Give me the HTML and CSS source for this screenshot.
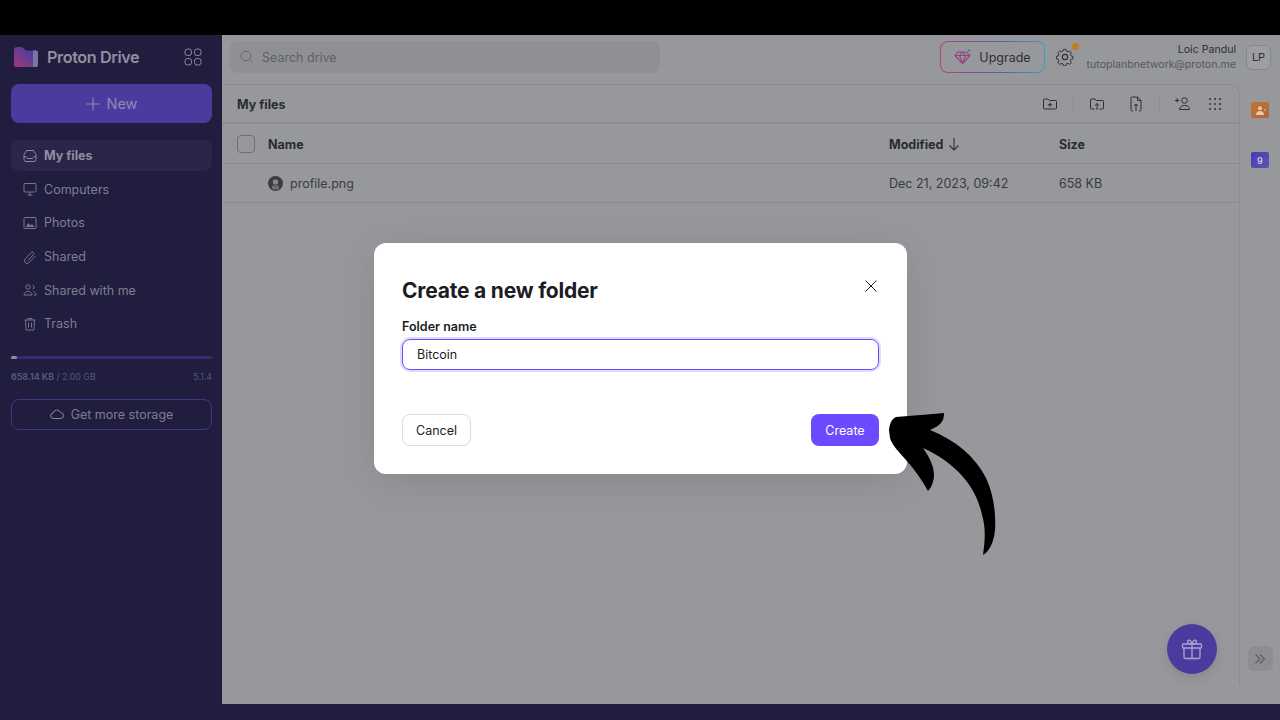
FILE: index.html
```html
<!DOCTYPE html>
<html lang="en">
<head>
  <meta charset="UTF-8">
  <title>Proton Drive</title>
  <link rel="stylesheet" href="styles.css">
</head>
<body>
  <div class="black-bar"></div>

  <div class="app">
    <aside class="sidebar">
      <div class="brand">
        <svg class="brand-logo" width="26" height="22" viewBox="0 0 26 22">
          <defs>
            <linearGradient id="folderGrad" x1="0" y1="1" x2="1" y2="0">
              <stop offset="0" stop-color="#a2386f"/>
              <stop offset="0.6" stop-color="#5f3c9b"/>
              <stop offset="1" stop-color="#46397f"/>
            </linearGradient>
          </defs>
          <path d="M1 4a3 3 0 0 1 3-3h5l4 3.500h10a2 2 0 0 1 2 2V19a2 2 0 0 1-2 2H3a2 2 0 0 1-2-2z" fill="url(#folderGrad)"/>
          <path d="M20 4.500h3a2 2 0 0 1 2 2V19a2 2 0 0 1-2 2h-3z" fill="#7a74a8"/>
        </svg>
        <span class="brand-name">Proton Drive</span>
        <svg class="apps-icon" width="18" height="18" viewBox="0 0 18 18" fill="none" stroke="#8b8a9c" stroke-width="1">
          <rect x="1" y="1" width="6.500" height="6.500" rx="2.500"/>
          <rect x="10.500" y="1" width="6.500" height="6.500" rx="2.500"/>
          <rect x="1" y="10.500" width="6.500" height="6.500" rx="2.500"/>
          <rect x="10.500" y="10.500" width="6.500" height="6.500" rx="2.500"/>
        </svg>
      </div>

      <button class="new-btn">
        <svg width="14" height="14" viewBox="0 0 14 14" stroke="#8f8ab5" stroke-width="1.100"><path d="M7 .5v13M.5 7h13"/></svg>
        New
      </button>

      <nav class="nav">
        <a class="nav-item active">
          <svg width="14" height="14" viewBox="0 0 14 14" fill="none" stroke="#8b8a9c"><path d="M1 8V5.500L3.500 1.500h7L13 5.500V10.500a2 2 0 0 1-2 2H3a2 2 0 0 1-2-2V8c2-1 3 .2 3.500 1.500h5C10 8.200 11 7 13 8"/></svg>
          My files
        </a>
        <a class="nav-item">
          <svg width="14" height="14" viewBox="0 0 14 14" fill="none" stroke="#77768c"><rect x="1" y="1.500" width="12" height="8.500" rx="1"/><path d="M7 10v3M4.500 13h5"/></svg>
          Computers
        </a>
        <a class="nav-item">
          <svg width="14" height="14" viewBox="0 0 14 14" fill="none" stroke="#77768c"><rect x="1" y="1.500" width="12" height="11" rx="1"/><path d="M2.500 11l3-4 2 2.500 1.500-1.500 2.500 3z" fill="#77768c" stroke="none"/></svg>
          Photos
        </a>
        <a class="nav-item">
          <svg width="14" height="14" viewBox="0 0 14 14" fill="none" stroke="#77768c"><path d="M5 10.500l5.500-6a1.500 1.500 0 0 0-2.200-2L2 9a2.700 2.700 0 0 0 3.800 3.800l6.500-6.800"/></svg>
          Shared
        </a>
        <a class="nav-item">
          <svg width="14" height="14" viewBox="0 0 14 14" fill="none" stroke="#77768c"><circle cx="5" cy="4" r="2.200"/><path d="M1 12c0-2 1.500-3.500 4-3.500S9 10 9 12zM9.500 2a2.200 2.200 0 0 1 0 4.200M10.500 8.500c1.500.2 2.500 1.500 2.500 3.500h-2"/></svg>
          Shared with me
        </a>
        <a class="nav-item">
          <svg width="14" height="14" viewBox="0 0 14 14" fill="none" stroke="#77768c"><path d="M1.500 3h11M5 3V1.500h4V3M2.500 3l.7 10h7.600l.7-10M5.500 5.500v5M8.500 5.500v5"/></svg>
          Trash
        </a>
      </nav>

      <div class="storage-track"><div class="storage-fill"></div></div>
      <div class="storage-info">
        <span><b>658.14 KB</b> / 2.00 GB</span>
        <span>5.1.4</span>
      </div>
      <button class="storage-btn">
        <svg width="14" height="14" viewBox="0 0 14 14" fill="none" stroke="#8b8a9c"><path d="M3.500 11.500a2.700 2.700 0 0 1-.3-5.400A3.800 3.800 0 0 1 10.500 5.500a3 3 0 0 1 0 6z"/></svg>
        Get more storage
      </button>
    </aside>

    <div class="main">
      <header class="topbar">
        <div class="search">
          <svg width="14" height="14" viewBox="0 0 14 14" fill="none" stroke="#68696e"><circle cx="6" cy="6" r="4.800"/><path d="M9.500 9.500L13 13"/></svg>
          Search drive
        </div>
        <div class="upgrade">
          <svg width="18" height="16" viewBox="0 0 18 16" fill="none" stroke="#96407f" stroke-width="1.100">
            <path d="M4 3h8l4 3.500-7.500 8L1 6.500zM1 6.500h15M5.500 6.500l3 8 3-8L8.500 3z"/>
            <path d="M15 0v3M13.500 1.500h3" stroke="#2f86a5"/>
          </svg>
          Upgrade
        </div>
        <div class="settings">
          <svg width="18" height="18" viewBox="0 0 24 24" fill="none" stroke="#2e2f36" stroke-width="1.500" stroke-linejoin="round">
            <circle cx="12" cy="12" r="3.500"/>
            <path d="M10 2h4l.6 3 2.500 1.100 2.600-1.700 2.800 2.900-1.700 2.500 1 2.500 3 .7v4l-3 .6-1 2.500 1.700 2.600-2.800 2.800-2.600-1.700-2.500 1-.6 3h-4l-.6-3-2.500-1-2.600 1.700-2.800-2.800 1.700-2.600-1-2.500-3-.6v-4l3-.7 1-2.500-1.700-2.500 2.800-2.900 2.600 1.700L9.400 5z" transform="translate(12 12) scale(.86) translate(-12.500 -14)"/>
          </svg>
          <span class="settings-dot"></span>
        </div>
        <div class="user">
          <div class="user-name">Loic Pandul</div>
          <div class="user-mail">tutoplanbnetwork@proton.me</div>
        </div>
        <div class="avatar">LP</div>
      </header>

      <div class="body-row">
        <section class="panel">
          <div class="toolbar">
            <h2 class="toolbar-title">My files</h2>
            <svg class="tool" width="16" height="16" viewBox="0 0 16 16"><path d="M1.500 4a1 1 0 0 1 1-1h3.500l1.500 1.500h6a1 1 0 0 1 1 1V12a1 1 0 0 1-1 1h-11a1 1 0 0 1-1-1zM8 6.500v4.500M5.800 8.700h4.400"/></svg>
            <span class="tool-sep"></span>
            <svg class="tool" width="16" height="16" viewBox="0 0 16 16"><path d="M5.500 13h-3a1 1 0 0 1-1-1V4a1 1 0 0 1 1-1h3.500l1.500 1.500h6a1 1 0 0 1 1 1V12a1 1 0 0 1-1 1h-3M8 14V7.500M5.800 9.700L8 7.500l2.200 2.200"/></svg>
            <svg class="tool" width="16" height="16" viewBox="0 0 16 16"><path d="M5 15H4a1 1 0 0 1-1-1V2a1 1 0 0 1 1-1h5.500L13 4.500V14a1 1 0 0 1-1 1h-1M9.500 1v3.500H13M8 15V8M6 10l2-2 2 2"/></svg>
            <span class="tool-sep"></span>
            <svg class="tool" width="16" height="16" viewBox="0 0 16 16"><circle cx="9.500" cy="4.500" r="2.800"/><path d="M4.500 13.500c0-2.500 2-4 5-4s5 1.500 5 3v1zM0 4.500h4.500M2.200 2.300v4.400"/></svg>
            <svg class="tool-dots" width="14" height="14" viewBox="0 0 14 14" fill="#2e2f36">
              <circle cx="2" cy="2" r="1"/><circle cx="7" cy="2" r="1"/><circle cx="12" cy="2" r="1"/>
              <circle cx="2" cy="7" r="1"/><circle cx="7" cy="7" r="1"/><circle cx="12" cy="7" r="1"/>
              <circle cx="2" cy="12" r="1"/><circle cx="7" cy="12" r="1"/><circle cx="12" cy="12" r="1"/>
            </svg>
          </div>

          <div class="table-row table-head">
            <span class="check"></span>
            <span>Name</span>
            <span class="sorted">Modified
              <svg width="12" height="14" viewBox="0 0 12 14" fill="none" stroke="#2e2f36" stroke-width="1.100"><path d="M6 1v12M1.500 8.500L6 13l4.500-4.500"/></svg>
            </span>
            <span>Size</span>
          </div>
          <div class="table-row file-row">
            <span></span>
            <span class="file-name">
              <svg width="15" height="15" viewBox="0 0 15 15">
                <circle cx="7.500" cy="7.500" r="7.500" fill="#3b3c40"/>
                <rect x="5" y="3.500" width="5" height="5" rx="1.500" fill="#86878b"/>
                <rect x="4" y="9.500" width="7" height="4" rx="1" fill="#6d6e72"/>
              </svg>
              profile.png
            </span>
            <span>Dec 21, 2023, 09:42</span>
            <span>658 KB</span>
          </div>
        </section>

        <aside class="rail">
          <div class="rail-app rail-contacts">
            <svg width="12" height="9" viewBox="0 0 12 9" fill="#e6c9ac"><circle cx="6" cy="2.200" r="2"/><path d="M2 9c0-2.500 1.500-4 4-4s4 1.500 4 4zM10 3.500h2v1h-2z"/></svg>
          </div>
          <div class="rail-app rail-calendar">9</div>
          <div class="rail-toggle">
            <svg width="12" height="12" viewBox="0 0 12 12" fill="none" stroke="#5a5b60" stroke-width="1.100"><path d="M1.500 1.500L6 6l-4.500 4.500M6 1.500L10.500 6 6 10.500"/></svg>
          </div>
        </aside>
      </div>
    </div>
  </div>

  <div class="bottom-bar"></div>

  <button class="gift">
    <svg width="22" height="22" viewBox="0 0 22 22" fill="none" stroke="#a8a4cf" stroke-width="1.300" stroke-linejoin="round">
      <rect x="1.500" y="6" width="19" height="4" rx="1"/>
      <path d="M3 10v9a1.500 1.500 0 0 0 1.500 1.500h13A1.500 1.500 0 0 0 19 19v-9M11 6v14.500M11 6C9 6 6.500 5.500 6.500 3.500S10 1 11 6zM11 6c2 0 4.500-.5 4.500-2.500S12 1 11 6z"/>
    </svg>
  </button>

  <div class="overlay">
    <div class="modal">
      <div class="modal-head">
        <h1 class="modal-title">Create a new folder</h1>
        <svg class="modal-close" width="12" height="12" viewBox="0 0 12 12" stroke="#1c1c22" stroke-width="1"><path d="M.5.500l11 11M11.500.500l-11 11"/></svg>
      </div>
      <label class="field-label">Folder name</label>
      <div class="field">Bitcoin</div>
      <div class="modal-foot">
        <button class="btn-cancel">Cancel</button>
        <button class="btn-create">Create</button>
      </div>
    </div>
  </div>

  <svg class="arrow" width="125" height="160" viewBox="880 405 125 160">
    <path d="M889 430C890 422 892 419 896 417C912 416 930 414 944 413C944 420 942 425 930 430C955 440 975 456 986 478C994 495 996 515 995 530C994 542 989 552 983 555C985 540 986 528 982 515C977 490 960 465 923 448C930 458 934 467 934 475C934 482 931 488 928 491C922 480 915 470 906 460C899 452 892 445 890 438z" fill="#000"/>
  </svg>
</body>
</html>
```

FILE: styles.css
```css
* {
  box-sizing: border-box;
}
html, body {
  margin: 0;
  height: 720px;
  overflow: hidden;
}
body {
  font-family: Inter, "Liberation Sans", sans-serif;
  font-size: 12.500px;
  color: #2e2f36;
  background-color: #97989c;
  display: flex;
  flex-direction: column;
}
button {
  font-family: inherit;
  cursor: pointer;
}
.black-bar {
  height: 35px;
  background-color: #000;
}
.bottom-bar {
  height: 16px;
  background-color: #201d3e;
}
.app {
  height: 669px;
  display: flex;
}

/* sidebar */
.sidebar {
  width: 222px;
  background-color: #201d3e;
  padding: 0 10px 0 11px;
  color: #8b8a9c;
}
.brand {
  height: 49px;
  display: flex;
  align-items: center;
  padding: 0 0 5px 2px;
}
.brand-name {
  margin-left: 8px;
  font-size: 16.200px;
  font-weight: 600;
  letter-spacing: -0.4px;
  color: #918f9f;
  flex: 1;
}
.apps-icon {
  margin-right: 10px;
}
.new-btn {
  width: 201px;
  height: 39px;
  border: 0;
  border-radius: 8px;
  background-color: #4d3a9e;
  color: #8f8ab5;
  font-size: 14.500px;
  display: flex;
  align-items: center;
  justify-content: center;
  gap: 7px;
}
.nav {
  margin-top: 17px;
  display: flex;
  flex-direction: column;
  gap: 2.700px;
}
.nav-item {
  height: 31px;
  display: flex;
  align-items: center;
  gap: 7px;
  padding-left: 12px;
  border-radius: 8px;
  color: #7f7e91;
}
.nav-item.active {
  background-color: #2a2549;
  color: #8f8e9f;
  font-weight: 700;
}
.storage-track {
  margin-top: 16.500px;
  height: 3px;
  border-radius: 2px;
  background-color: #352c6f;
}
.storage-fill {
  width: 6px;
  height: 3px;
  border-radius: 2px;
  background-color: #8b8a9c;
}
.storage-info {
  margin-top: 12px;
  display: flex;
  justify-content: space-between;
  font-size: 8.800px;
  line-height: 12px;
  color: #575482;
}
.storage-btn {
  margin-top: 16px;
  width: 201px;
  height: 31px;
  border: 1px solid #3f3680;
  border-radius: 8px;
  background: transparent;
  color: #7f7e91;
  font-size: 12.500px;
  display: flex;
  align-items: center;
  justify-content: center;
  gap: 7px;
}

/* top bar */
.main {
  flex: 1;
  display: flex;
  flex-direction: column;
}
.topbar {
  height: 49px;
  display: flex;
  align-items: center;
  padding: 0 9px 5px 8px;
}
.search {
  width: 430px;
  height: 32px;
  border-radius: 8px;
  background-color: #8f9094;
  color: #5f6065;
  display: flex;
  align-items: center;
  gap: 8px;
  padding-left: 10px;
}
.upgrade {
  margin-left: 280px;
  width: 105px;
  height: 32px;
  border: 1px solid transparent;
  border-radius: 8px;
  background: linear-gradient(#97989c, #97989c) padding-box,
    linear-gradient(90deg, #b0447f, #5b5aa0 55%, #3f9dbc) border-box;
  display: flex;
  align-items: center;
  justify-content: center;
  gap: 7px;
}
.settings {
  position: relative;
  margin-left: 11px;
  width: 18px;
  height: 18px;
}
.settings-dot {
  position: absolute;
  top: -5px;
  right: -5px;
  width: 7px;
  height: 7px;
  border-radius: 50%;
  background-color: #c17f1c;
}
.user {
  margin-left: auto;
  text-align: right;
  font-size: 10.600px;
  line-height: 15px;
}
.user-mail {
  color: #56575c;
}
.avatar {
  margin-left: 10px;
  width: 25px;
  height: 25px;
  border: 1px solid #86878b;
  border-radius: 6px;
  background-color: #9d9ea2;
  display: flex;
  align-items: center;
  justify-content: center;
  font-size: 11px;
}

/* file list */
.body-row {
  flex: 1;
  display: flex;
  align-items: flex-start;
}
.panel {
  width: 1018px;
  height: 601px;
  border-top: 1px solid #8c8d91;
  border-right: 1px solid #8c8d91;
  border-top-right-radius: 10px;
}
.toolbar {
  height: 39px;
  display: flex;
  align-items: center;
  padding: 1px 17px 0 15px;
  border-bottom: 2px solid #8c8d91;
}
.toolbar-title {
  margin: 0 auto 0 0;
  font-size: 12.500px;
  font-weight: 700;
  color: #2a2b31;
}
.tool {
  fill: none;
  stroke: #2e2f36;
  stroke-width: 1;
}
.tool + .tool {
  margin-left: 23px;
}
.tool-dots {
  margin-left: 17px;
}
.tool-sep {
  width: 1px;
  height: 20px;
  background-color: #8c8d91;
  margin: 0 15px;
}
.table-row {
  display: grid;
  grid-template-columns: 31px 621px 170px 1fr;
  align-items: center;
  padding-left: 15px;
  border-bottom: 1px solid #8a8b8f;
}
.table-head {
  height: 40px;
  padding-top: 1px;
  font-weight: 700;
  color: #2a2b31;
}
.file-row {
  height: 39px;
  color: #3a3b41;
}
.check {
  width: 18px;
  height: 18px;
  border: 1px solid #6f7075;
  border-radius: 4px;
}
.sorted {
  display: flex;
  align-items: center;
  gap: 5px;
}
.file-name {
  display: flex;
  align-items: center;
  gap: 7px;
}
.rail {
  flex: 1;
  height: 601px;
  display: flex;
  flex-direction: column;
  align-items: center;
  padding-top: 18px;
}
.rail-app {
  width: 18px;
  height: 16px;
  border-radius: 2px;
  display: flex;
  align-items: center;
  justify-content: center;
  font-size: 9px;
  font-weight: 600;
  color: #c8c6e6;
}
.rail-contacts {
  background: linear-gradient(135deg, #c47436, #b0663a);
}
.rail-calendar {
  margin-top: 34px;
  background: linear-gradient(135deg, #4d37b5, #5a58ad);
}
.rail-toggle {
  margin-top: 478px;
  width: 25px;
  height: 25px;
  border-radius: 6px;
  background-color: #8d8e92;
  display: flex;
  align-items: center;
  justify-content: center;
}

/* floating things */
.gift {
  position: absolute;
  left: 1167px;
  top: 624px;
  width: 50px;
  height: 50px;
  border: 0;
  border-radius: 50%;
  background-color: #4d3a9e;
  box-shadow: 0 4px 12px rgba(0, 0, 0, 0.1);
  display: flex;
  align-items: center;
  justify-content: center;
}
.overlay {
  position: absolute;
  top: 0;
  left: 0;
  width: 1280px;
  height: 720px;
  padding: 0 0 3px 1px;
  display: flex;
  align-items: center;
  justify-content: center;
}
.modal {
  width: 533px;
  height: 231px;
  padding: 28px;
  border-radius: 12px;
  background-color: #fff;
  color: #1c1c22;
  box-shadow: 0 8px 40px rgba(0, 0, 0, 0.1);
  display: flex;
  flex-direction: column;
}
.modal-head {
  height: 37px;
  display: flex;
  justify-content: space-between;
  align-items: flex-start;
}
.modal-title {
  margin: 5px 0 0;
  font-size: 21px;
  line-height: 30px;
  font-weight: 700;
  letter-spacing: -0.2px;
}
.modal-close {
  margin: 9px 2px 0 0;
}
.field-label {
  margin-top: 11px;
  font-size: 12.500px;
  line-height: 17px;
  font-weight: 600;
}
.field {
  margin-top: 4px;
  width: 477px;
  height: 31px;
  padding-left: 14px;
  border: 1px solid #6d4aff;
  border-radius: 8px;
  box-shadow: 0 0 0 2px #e2dbff;
  display: flex;
  align-items: center;
  font-size: 12.500px;
}
.modal-foot {
  margin-top: 44px;
  width: 477px;
  display: flex;
  justify-content: space-between;
  align-items: center;
}
.btn-cancel {
  width: 69px;
  height: 32px;
  border: 1px solid #dcdce0;
  border-radius: 8px;
  background-color: #fff;
  color: #1c1c22;
  font-size: 12.500px;
}
.btn-create {
  width: 68px;
  height: 32px;
  border: 0;
  border-radius: 8px;
  background-color: #6d4aff;
  color: #fff;
  font-size: 12.500px;
}
.arrow {
  position: absolute;
  left: 880px;
  top: 405px;
}
```
